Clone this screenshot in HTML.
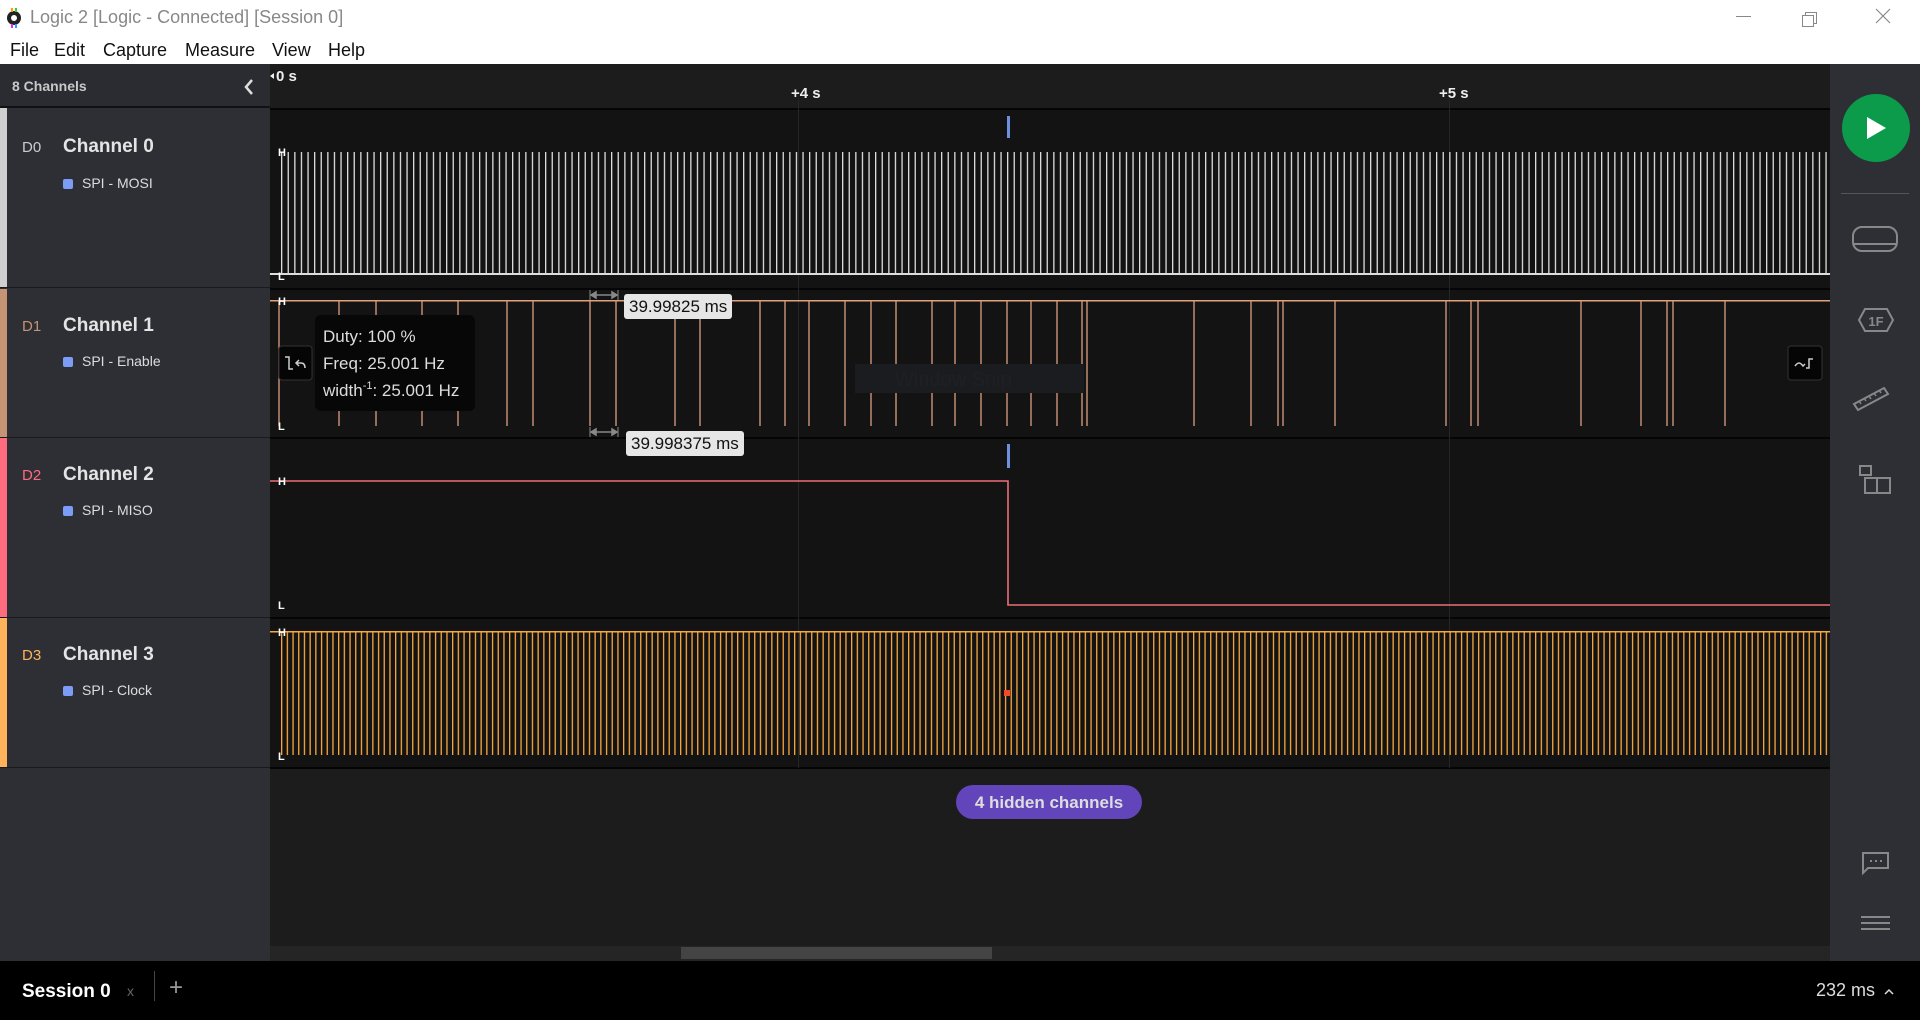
<!DOCTYPE html>
<html><head><meta charset="utf-8"><style>
*{margin:0;padding:0;box-sizing:border-box}
body{width:1920px;height:1020px;overflow:hidden;background:#1c1c1c;font-family:"Liberation Sans",sans-serif;position:relative}
.abs{position:absolute}
#title{left:0;top:0;width:1920px;height:40px;background:#fff}
#menu{left:0;top:40px;width:1920px;height:24px;background:#fff}
#menu span{position:absolute;top:0;font-size:18px;color:#111}
#left{left:0;top:64px;width:270px;height:897px;background:#2e2f35}
.row{position:absolute;left:0;width:270px;border-bottom:1px solid #1a1a1d}
.stripe{position:absolute;left:0;top:0;bottom:0;width:7px}
.dn{position:absolute;left:22px;font-size:15px}
.cn{position:absolute;left:63px;font-size:19px;color:#e4e4e4;font-weight:bold}
.an{position:absolute;left:63px;font-size:14px;color:#ddd}
.an i{display:inline-block;width:10px;height:10px;background:#7b9cf7;border-radius:2px;margin-right:9px;vertical-align:-1px}
#right{left:1830px;top:64px;width:90px;height:897px;background:#2e2f35}
#bottom{left:0;top:961px;width:1920px;height:59px;background:#000}
.lbl{position:absolute;background:#e6e6e6;color:#111;font-size:17px;border-radius:3px;padding:1px 5px;height:25px;line-height:23px}
</style></head><body>
<div id="title" class="abs">
<svg class="abs" style="left:4px;top:6px" width="20" height="24" viewBox="0 0 20 24"><circle cx="10" cy="12" r="7" fill="#222"/><circle cx="10" cy="12" r="3" fill="#fff"/><rect x="7" y="2" width="2" height="4" fill="#f90"/><rect x="11" y="2" width="2" height="4" fill="#3c3"/><rect x="7" y="18" width="2" height="4" fill="#c3f"/><rect x="11" y="18" width="2" height="4" fill="#39f"/></svg>
<div class="abs" style="left:30px;top:7px;font-size:18px;color:#888">Logic 2 [Logic - Connected] [Session 0]</div>
<div class="abs" style="left:1736px;top:16px;width:15px;height:1px;background:#888"></div>
<div class="abs" style="left:1805px;top:12px;width:12px;height:12px;border:1px solid #888;background:#fff"></div>
<div class="abs" style="left:1802px;top:15px;width:12px;height:12px;border:1px solid #888;background:#fff"></div>
<svg class="abs" style="left:1875px;top:8px" width="16" height="16"><path d="M1 1L15 15M15 1L1 15" stroke="#888" stroke-width="1.2"/></svg>
</div>
<div id="menu" class="abs"><span style="left:10px">File</span><span style="left:54px">Edit</span><span style="left:103px">Capture</span><span style="left:185px">Measure</span><span style="left:272px">View</span><span style="left:328px">Help</span></div>

<div id="left" class="abs">
<div class="abs" style="left:0;top:0;width:270px;height:44px;background:#2b2c31;border-bottom:2px solid #111"></div>
<div class="abs" style="left:12px;top:14px;font-size:14px;color:#c8c8c8;font-weight:bold">8 Channels</div>
<svg class="abs" style="left:242px;top:13px" width="14" height="20"><path d="M10 3L4 10L10 17" stroke="#ddd" stroke-width="2.5" fill="none"/></svg>
<div class="row" style="top:44px;height:180px"><div class="stripe" style="background:#cfcfcf"></div><div class="dn" style="top:31px;color:#ccc">D0</div><div class="cn" style="top:28px">Channel 0</div><div class="an" style="top:67px"><i></i>SPI - MOSI</div></div>
<div class="row" style="top:225px;height:149px"><div class="stripe" style="background:#c49474"></div><div class="dn" style="top:29px;color:#c49474">D1</div><div class="cn" style="top:26px">Channel 1</div><div class="an" style="top:64px"><i></i>SPI - Enable</div></div>
<div class="row" style="top:374px;height:180px"><div class="stripe" style="background:#ff6b7f"></div><div class="dn" style="top:29px;color:#ff6b7f">D2</div><div class="cn" style="top:26px">Channel 2</div><div class="an" style="top:64px"><i></i>SPI - MISO</div></div>
<div class="row" style="top:554px;height:150px"><div class="stripe" style="background:#ffb45c"></div><div class="dn" style="top:29px;color:#ffb45c">D3</div><div class="cn" style="top:26px">Channel 3</div><div class="an" style="top:64px"><i></i>SPI - Clock</div></div>
</div>

<svg class="abs" style="left:270px;top:64px" width="1560" height="897" viewBox="270 64 1560 897">
<defs>
<pattern id="p0" x="281" y="0" width="6.6" height="1020" patternUnits="userSpaceOnUse"><rect x="0" y="152" width="1.3" height="122" fill="#dedede"/></pattern>
<pattern id="p3" x="281" y="0" width="5.7" height="1020" patternUnits="userSpaceOnUse"><rect x="0" y="632" width="1.3" height="123" fill="#f7a83e"/></pattern>
</defs>
<rect x="270" y="64" width="1560" height="44" fill="#1c1c1c"/>
<rect x="270" y="108" width="1560" height="2" fill="#050505"/>
<rect x="270" y="110" width="1560" height="658" fill="#131313"/>
<g fill="#050505"><rect x="270" y="288" width="1560" height="2"/><rect x="270" y="437" width="1560" height="2"/><rect x="270" y="617" width="1560" height="2"/><rect x="270" y="767" width="1560" height="2"/></g>
<rect x="798" y="100" width="1" height="668" fill="#262626"/><rect x="1449" y="100" width="1" height="668" fill="#262626"/>
<g font-family="Liberation Sans" font-weight="bold" fill="#eee" font-size="15"><text x="276" y="81">0 s</text><path d="M270 76l4 -3v6z" fill="#eee"/><text x="791" y="98">+4 s</text><text x="1439" y="98">+5 s</text></g>
<rect x="1007" y="116" width="3" height="22" fill="#6f8fe0"/>
<rect x="1007" y="444" width="3" height="24" fill="#6f8fe0"/>
<rect x="281" y="152" width="1549" height="122" fill="url(#p0)"/>
<rect x="270" y="273" width="1560" height="2" fill="#ddd"/>
<rect x="270" y="300" width="1560" height="1.5" fill="#e0a07c"/>
<g stroke="#d9a07e" stroke-width="1.3">
<path d="M279 300V426M339 300V426M376 300V426M422 300V426M458 300V426M507 300V426M533 300V426M590 300V426M616 300V426M675 300V426M700 300V426M760 300V426M785 300V426M809 300V426M845 300V426M871 300V426M896 300V426M932 300V426M955 300V426M981 300V426M1007 300V426M1031 300V426M1057 300V426M1082 300V426M1087 300V426M1194 300V426M1251 300V426M1278 300V426M1283 300V426M1335 300V426M1446 300V426M1471 300V426M1478 300V426M1581 300V426M1641 300V426M1667 300V426M1673 300V426M1725 300V426"/>
</g>
<rect x="855" y="364" width="229" height="29" fill="#1b1c20"/>
<text x="895" y="386" font-size="20" fill="#1f2024" font-family="Liberation Sans">Window Snip</text>
<path d="M270 481H1008V605H1830" stroke="#ef6c78" stroke-width="1.6" fill="none"/>
<rect x="281" y="632" width="1549" height="123" fill="url(#p3)"/>
<rect x="270" y="631" width="1560" height="1.5" fill="#f7a83e"/>
<rect x="1004" y="690" width="6" height="6" fill="#f04a2a"/>
<g font-family="Liberation Sans" font-weight="bold" fill="#fff" font-size="11">
<text x="278" y="156">H</text><text x="278" y="280">L</text>
<text x="278" y="305">H</text><text x="278" y="430">L</text>
<text x="278" y="485">H</text><text x="278" y="609">L</text>
<text x="278" y="636">H</text><text x="278" y="760">L</text>
</g>
<g stroke="#888" stroke-width="1.5" fill="#888"><path d="M591 295H617"/><path d="M591 295l5-3v6zM617 295l-5-3v6z"/><path d="M591 432H617"/><path d="M591 432l5-3v6zM617 432l-5-3v6z"/><path d="M590 290V300M618 290V300M590 427V437M618 427V437" stroke-width="1"/></g>
<rect x="315" y="315" width="160" height="96" rx="6" fill="#070707"/>
<g font-family="Liberation Sans" font-size="17" fill="#ddd"><text x="323" y="342">Duty: 100 %</text><text x="323" y="369">Freq: 25.001 Hz</text><text x="323" y="396">width<tspan font-size="11" dy="-7">-1</tspan><tspan dy="7">: 25.001 Hz</tspan></text></g>
<rect x="279" y="346" width="33" height="34" rx="3" fill="#050505" stroke="#333"/>
<path d="M285 357h4v12h4M299 360l-3 3 3 3M296 363h5c3 0 4 2 4 5" stroke="#ccc" stroke-width="1.5" fill="none"/>
<rect x="1788" y="346" width="34" height="34" rx="3" fill="#050505" stroke="#333"/>
<path d="M1795 366c3-4 5-4 8 0l2-2M1806 368h3v-9h4" stroke="#ccc" stroke-width="1.5" fill="none"/>
<rect x="270" y="946" width="1560" height="15" fill="#252525"/>
<rect x="681" y="947" width="311" height="12" fill="#444"/>
<rect x="956" y="785" width="186" height="34" rx="17" fill="#6244bb"/>
<text x="1049" y="808" text-anchor="middle" font-family="Liberation Sans" font-weight="bold" font-size="17" fill="#ddd">4 hidden channels</text>
</svg>
<div class="lbl" style="left:624px;top:294px">39.99825 ms</div>
<div class="lbl" style="left:626px;top:431px">39.998375 ms</div>

<div id="right" class="abs">
<svg width="90" height="897" viewBox="1830 64 90 897">
<circle cx="1876" cy="128" r="34" fill="#0c9a4b"/><path d="M1867 117v22l19-11z" fill="#fff"/>
<rect x="1841" y="193" width="68" height="1" fill="#555"/>
<rect x="1853" y="227" width="44" height="24" rx="9" stroke="#888" stroke-width="2" fill="none"/><path d="M1853 244h44" stroke="#888" stroke-width="2"/>
<path d="M1865 309l-6 11 6 11h22l6-11-6-11z" stroke="#888" stroke-width="2" fill="none"/><text x="1876" y="326" text-anchor="middle" font-family="Liberation Sans" font-weight="bold" font-size="13" fill="#888">1F</text>
<path d="M1854 404l30-16 4 6-30 16z" stroke="#888" stroke-width="2" fill="none"/><path d="M1861 404l-2-3M1866 401l-2-3M1871 399l-2-3M1876 396l-2-3M1881 393l-2-3" stroke="#888" stroke-width="1.5"/>
<rect x="1860" y="466" width="11" height="9" stroke="#888" stroke-width="2" fill="none"/><rect x="1865" y="478" width="25" height="15" stroke="#888" stroke-width="2" fill="none"/><path d="M1877 478v15" stroke="#888" stroke-width="2"/>
<path d="M1863 853h25v15h-20l-5 5z" stroke="#888" stroke-width="2" fill="none"/><path d="M1870 861h2M1875 861h2M1880 861h2" stroke="#888" stroke-width="2"/>
<path d="M1861 917h29M1861 923h29M1861 929h29" stroke="#888" stroke-width="2"/>
</svg>
</div>

<div id="bottom" class="abs">
<div class="abs" style="left:22px;top:20px;font-size:19px;color:#fff;font-weight:bold">Session 0</div>
<div class="abs" style="left:127px;top:22px;font-size:14px;color:#666">x</div>
<div class="abs" style="left:154px;top:10px;width:1px;height:30px;background:#444"></div>
<div class="abs" style="left:169px;top:13px;font-size:24px;color:#999">+</div>
<div class="abs" style="left:1816px;top:19px;font-size:18px;color:#ddd">232 ms</div>
<svg class="abs" style="left:1883px;top:26px" width="12" height="10"><path d="M2 7l4-4 4 4" stroke="#ddd" stroke-width="1.5" fill="none"/></svg>
</div>
</body></html>
